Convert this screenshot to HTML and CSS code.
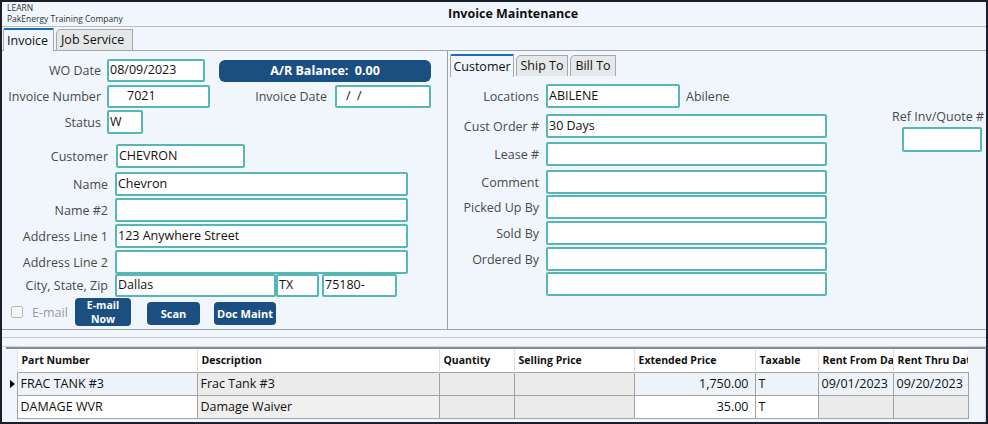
FILE: index.html
```html
<!DOCTYPE html>
<html>
<head>
<meta charset="utf-8">
<link rel="stylesheet" href="styles.css">
</head>
<body>
<div class="window">
  <header class="titlebar">
    <div class="company">
      <div>LEARN</div>
      <div>PakEnergy Training Company</div>
    </div>
    <h1 class="title">Invoice Maintenance</h1>
  </header>
  <nav class="tabs main-tabs">
    <span class="tab active">Invoice</span>
    <span class="tab">Job Service</span>
  </nav>
  <section class="form-area">
    <div class="left-panel">
      <div class="row r1">
        <label class="lbl w99">WO Date</label>
        <div class="inp" style="width:98px">08/09/2023</div>
        <button class="btn ar">A/R Balance:&nbsp; 0.00</button>
      </div>
      <div class="row r2">
        <label class="lbl w99">Invoice Number</label>
        <div class="inp indent" style="width:103px">7021</div>
        <label class="lbl inv-date-lbl">Invoice Date</label>
        <div class="inp indent-s" style="width:96px">/&nbsp; /</div>
      </div>
      <div class="row r3">
        <label class="lbl w99">Status</label>
        <div class="inp" style="width:36px">W</div>
      </div>
      <div class="row r4">
        <label class="lbl w106">Customer</label>
        <div class="inp cust" style="width:129px">CHEVRON</div>
      </div>
      <div class="row r5">
        <label class="lbl w106">Name</label>
        <div class="inp wide">Chevron</div>
      </div>
      <div class="row r6">
        <label class="lbl w106">Name #2</label>
        <div class="inp wide"></div>
      </div>
      <div class="row r6">
        <label class="lbl w106">Address Line 1</label>
        <div class="inp wide">123 Anywhere Street</div>
      </div>
      <div class="row r6">
        <label class="lbl w106">Address Line 2</label>
        <div class="inp wide"></div>
      </div>
      <div class="row r9">
        <label class="lbl w106">City, State, Zip</label>
        <div class="inp" style="width:161px">Dallas</div>
        <div class="inp tx" style="width:43px">TX</div>
        <div class="inp zip" style="width:75px">75180-</div>
      </div>
      <div class="row btnrow">
        <span class="check"></span>
        <span class="email-lbl">E-mail</span>
        <button class="btn two">E-mail<br>Now</button>
        <button class="btn scan">Scan</button>
        <button class="btn doc">Doc Maint</button>
      </div>
    </div>
    <div class="right-panel">
      <nav class="tabs sub-tabs">
        <span class="tab active">Customer</span>
        <span class="tab">Ship To</span>
        <span class="tab">Bill To</span>
      </nav>
      <div class="sub-body">
        <div class="fields">
          <div class="row g1">
            <label class="lbl w91">Locations</label>
            <div class="inp" style="width:134px">ABILENE</div>
            <span class="plain">Abilene</span>
          </div>
          <div class="row g2">
            <label class="lbl w91">Cust Order #</label>
            <div class="inp rwide">30 Days</div>
          </div>
          <div class="row g3">
            <label class="lbl w91">Lease #</label>
            <div class="inp rwide"></div>
          </div>
          <div class="row g3">
            <label class="lbl w91">Comment</label>
            <div class="inp rwide"></div>
          </div>
          <div class="row g4">
            <label class="lbl w91">Picked Up By</label>
            <div class="inp rwide"></div>
          </div>
          <div class="row g5">
            <label class="lbl w91">Sold By</label>
            <div class="inp rwide"></div>
          </div>
          <div class="row g5">
            <label class="lbl w91">Ordered By</label>
            <div class="inp rwide"></div>
          </div>
          <div class="row g4">
            <label class="lbl w91"></label>
            <div class="inp rwide"></div>
          </div>
        </div>
        <div class="ref">
          <label class="ref-lbl">Ref Inv/Quote #</label>
          <div class="inp ref-inp"></div>
        </div>
      </div>
    </div>
  </section>
  <div class="splitter"></div>
  <div class="grid-wrap">
    <table class="grid">
      <colgroup>
        <col style="width:11px"><col style="width:180px"><col style="width:242px"><col style="width:75px"><col style="width:120px"><col style="width:121px"><col style="width:63px"><col style="width:75px"><col style="width:75px">
      </colgroup>
      <thead>
        <tr>
          <th class="ind"></th>
          <th>Part Number</th>
          <th>Description</th>
          <th>Quantity</th>
          <th>Selling Price</th>
          <th>Extended Price</th>
          <th>Taxable</th>
          <th>Rent From Date</th>
          <th>Rent Thru Date</th>
        </tr>
      </thead>
      <tbody>
        <tr class="cur">
          <td class="ind"><span class="arrow"></span></td>
          <td class="sel">FRAC TANK #3</td>
          <td class="ro">Frac Tank #3</td>
          <td class="ro"></td>
          <td class="ro"></td>
          <td class="sel num">1,750.00</td>
          <td class="sel">T</td>
          <td class="sel">09/01/2023</td>
          <td class="sel">09/20/2023</td>
        </tr>
        <tr>
          <td class="ind"></td>
          <td>DAMAGE WVR</td>
          <td class="ro2">Damage Waiver</td>
          <td class="ro"></td>
          <td class="ro"></td>
          <td class="num">35.00</td>
          <td>T</td>
          <td class="ro"></td>
          <td class="ro"></td>
        </tr>
      </tbody>
    </table>
  </div>
</div>
</body>
</html>
```
FILE: styles.css
```css
* { box-sizing: border-box; }
html, body { margin: 0; padding: 0; }
body {
  font-family: "Open Sans", "Noto Sans", sans-serif;
  font-size: 12.5px;
  color: #111;
  background: #f0f6fc;
}
.window {
  width: 988px;
  height: 424px;
  border: 2px solid #1b1f2b;
  background: #f0f6fc;
  overflow: hidden;
  display: flex;
  flex-direction: column;
}
.titlebar {
  height: 25px;
  border-bottom: 1px solid #b9bcc0;
  display: flex;
  align-items: flex-start;
  flex: none;
}
.company {
  width: 446px;
  padding: 0 0 0 5px;
  font-size: 8.5px;
  line-height: 11px;
  color: #333;
}
.title {
  margin: 3px 0 0 0;
  font-size: 12.5px;
  font-weight: 700;
  color: #111;
  line-height: 17px;
}
.tabs { display: flex; align-items: flex-end; flex: none; }
.main-tabs {
  height: 24px;
  border-bottom: 1px solid #a3a6aa;
  padding-left: 1px;
}
.tab {
  height: 21px;
  padding: 0 3px;
  margin-right: 2px;
  font-size: 12.5px;
  line-height: 20px;
  color: #111;
  background: #e5e7e9;
  border: 1px solid #a8a8a8;
  border-bottom: none;
  border-top-left-radius: 5px;
  white-space: nowrap;
}
.tab.active {
  height: 23px;
  background: #f0f6fc;
  border-top: 2px solid #1e6cb6;
  border-top-left-radius: 2px;
  line-height: 21px;
  margin-bottom: -1px;
  position: relative;
}
.main-tabs .tab.active { width: 51px; }
.main-tabs .tab:nth-child(2) { width: 77px; padding-left: 4px; }

.form-area {
  height: 279px;
  border-bottom: 1px solid #a0a3a6;
  display: flex;
  flex: none;
}
.left-panel {
  width: 444px;
  padding-top: 8px;
  display: flex;
  flex-direction: column;
  flex: none;
}
.row { display: flex; align-items: center; flex: none; }
.lbl {
  text-align: right;
  color: #4a4a4a;
  white-space: nowrap;
  flex: none;
}
.w99 { width: 99px; margin-right: 6px; }
.w106 { width: 106px; margin-right: 8px; }
.w91 { width: 91px; margin-right: 7px; }
.inp {
  height: 24px;
  border: 2px solid #55b8b6;
  border-radius: 2px;
  background: #fff;
  padding: 0 1px;
  line-height: 19px;
  white-space: nowrap;
  color: #111;
  flex: none;
}
.indent { padding-left: 18px; }
.indent-s { padding-left: 9px; }
.r1 { height: 23px; }
.r1 .inp, .r2 .inp { height: 23px; line-height: 18px; }
.r2 { margin-top: 3px; height: 23px; }
.r3 { margin-top: 2px; height: 24px; }
.r4 { margin-top: 10px; }
.r5 { margin-top: 4px; }
.r6 { margin-top: 2px; }
.r9 { margin-top: 0; }
.r9 .inp { height: 23px; line-height: 18px; }
.wide { width: 293px; margin-left: -1px; }
.r9 .lbl { margin-right: 7px; }
.zip { margin-left: 3px; }
.inv-date-lbl { width: 117px; margin-right: 8px; }
.btn {
  border: none;
  background: #1c4f81;
  color: #fff;
  font-family: "Open Sans", "Noto Sans", sans-serif;
  font-weight: 700;
  font-size: 11px;
  border-radius: 4px;
  padding: 0;
  flex: none;
}
.ar {
  width: 212px;
  height: 22px;
  margin-left: 14px;
  font-size: 12.5px;
  border-radius: 6px;
}
.btnrow { height: 28px; margin-top: 1px; }
.check {
  width: 12px;
  height: 12px;
  border: 1px solid #b7b9bb;
  border-radius: 2px;
  background: #f6f8fa;
  margin-left: 9px;
}
.email-lbl { color: #9a9a9a; margin-left: 9px; width: 43px; }
.two {
  width: 56px;
  height: 28px;
  font-size: 10.5px;
  line-height: 14px;
}
.scan { width: 53px; height: 23px; margin-left: 16px; margin-top: 3px; }
.doc { width: 62px; height: 23px; margin-left: 14px; margin-top: 3px; }

.right-panel {
  flex: 1;
  border-left: 1px solid #9b9ea2;
  margin-left: 1px;
  display: flex;
  flex-direction: column;
}
.sub-tabs {
  height: 25px;
  padding-left: 2px;
}
.sub-tabs .tab { text-align: center; padding: 0; }
.sub-tabs .tab.active { width: 64px; }
.sub-tabs .tab:nth-child(2) { width: 52px; }
.sub-tabs .tab:nth-child(3) { width: 46px; }
.sub-body { display: flex; padding-top: 8px; }
.fields { display: flex; flex-direction: column; width: 379px; flex: none; }
.rwide { width: 281px; }
.g1 { height: 24px; }
.g2 { margin-top: 6px; }
.g3 { margin-top: 4px; }
.g4 { margin-top: 1px; }
.g5 { margin-top: 2px; }
.plain { margin-left: 6px; color: #4a4a4a; }
.ref {
  flex: 1;
  display: flex;
  flex-direction: column;
  align-items: flex-end;
  padding-top: 24px;
  padding-right: 4px;
}
.ref-lbl { color: #4a4a4a; margin-right: -2px; line-height: 17px; }
.ref-inp { width: 80px; height: 25px; margin-top: 2px; }

.splitter {
  height: 17px;
  flex: none;
  border-bottom: 1px solid #d2d6da;
}
.splitter::after {
  content: "";
  display: block;
  height: 7px;
  border-bottom: 1px solid #c6cacd;
}
.grid-wrap {
  margin-left: 4px;
  border-top: 2px solid #8a8d90;
  flex: 1;
  background: #f0f6fc;
  border-right: 1px solid #d0d4d8;
}
.grid {
  border-collapse: collapse;
  table-layout: fixed;
  width: 962px;
  font-size: 12.5px;
}
.grid th {
  background: #fff;
  height: 23px;
  text-align: left;
  font-weight: 700;
  font-size: 10.5px;
  padding: 0 4px;
  border-left: 1px solid #e0e0e0;
  white-space: nowrap;
  overflow: hidden;
  text-overflow: clip;
  color: #111;
}
.grid th.ind { background: #f0f6fc; border-left: none; }
.grid td {
  height: 23px;
  padding: 0 3px;
  border: 1px solid #a3a3a3;
  background: #fff;
  white-space: nowrap;
  overflow: hidden;
  color: #111;
}
.grid td.ind {
  background: #f0f6fc;
  border-left: none;
  border-top: none;
  border-bottom: none;
  padding: 0;
}
.grid td.sel { background: #edf3f9; }
.grid td.ro { background: #ebebeb; }
.grid td.ro2 { background: #f0f0f0; }
.grid td.num { text-align: right; padding-right: 6px; }
.arrow {
  display: block;
  width: 0;
  height: 0;
  margin-left: 4px;
  border-top: 4px solid transparent;
  border-bottom: 4px solid transparent;
  border-left: 5px solid #000;
}
```
